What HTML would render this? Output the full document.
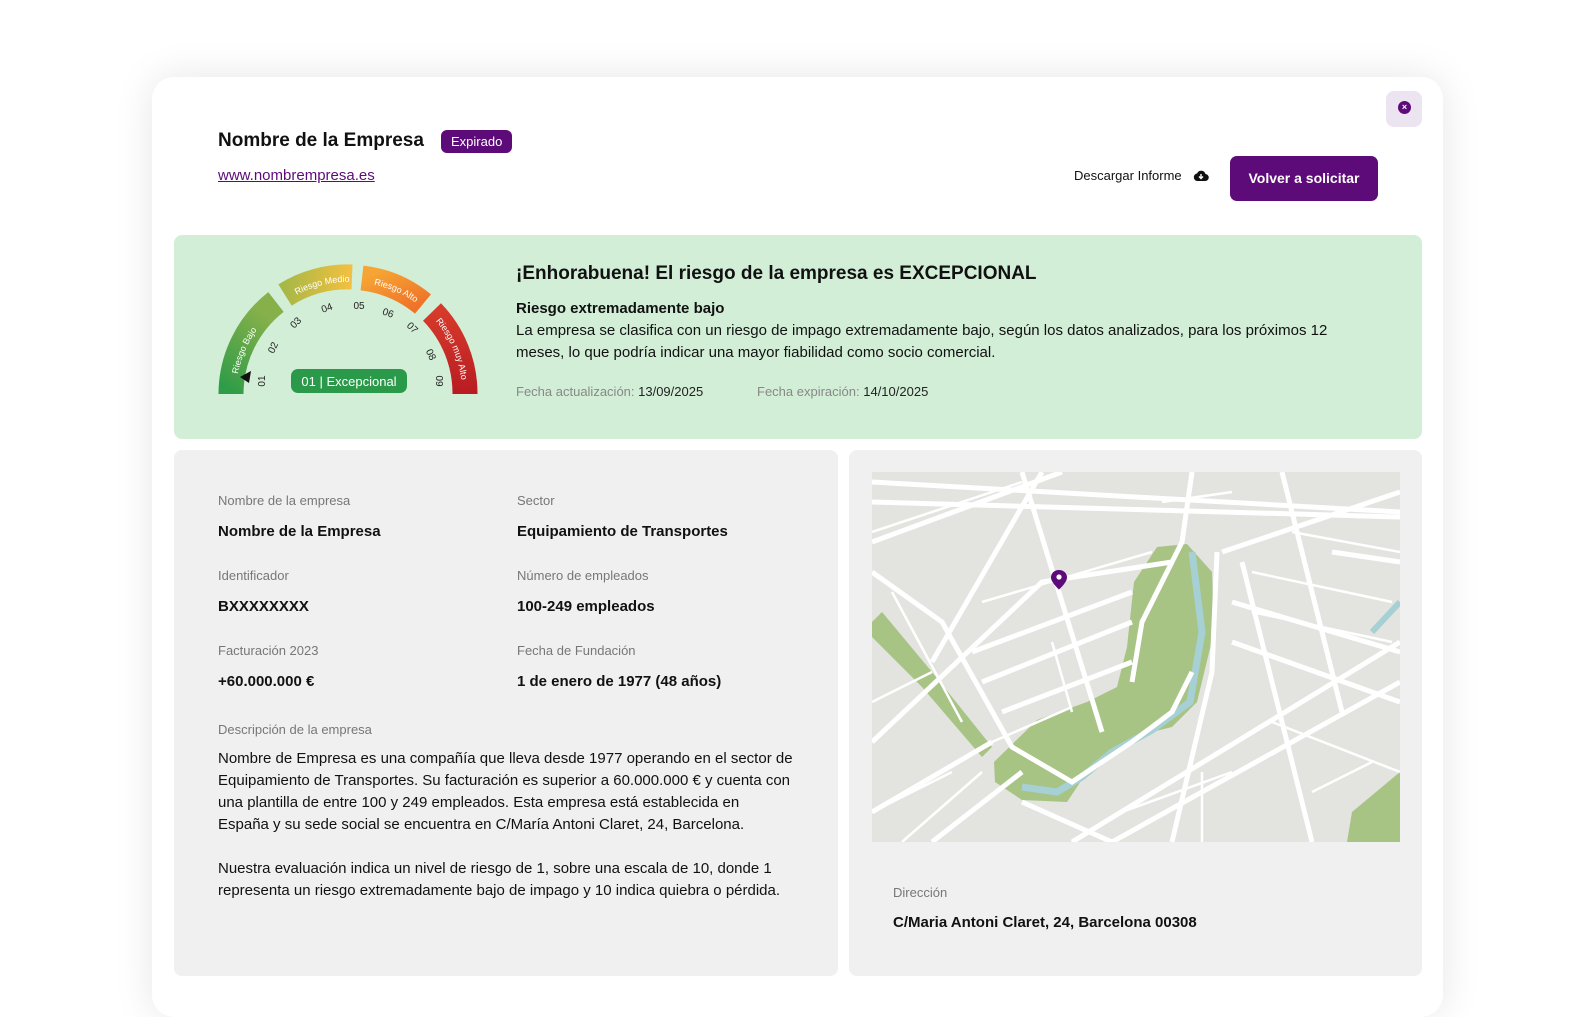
<!DOCTYPE html>
<html><head><meta charset="utf-8"><style>
*{box-sizing:border-box;margin:0;padding:0}
body{width:1580px;height:1006px;background:#fff;font-family:"Liberation Sans",Arial,sans-serif;color:#111;position:relative;overflow:hidden}
.card{position:absolute;left:152px;top:77px;width:1291px;height:940px;background:#fff;border-radius:22px;box-shadow:0 0 40px rgba(0,0,0,.10)}
.abs{position:absolute}
.lbl{font-size:13px;color:#777}
.val{font-size:15px;font-weight:bold;color:#111}
</style></head><body>
<div class="card"></div>
<div class="abs" style="left:218px;top:130px;font-size:19px;font-weight:bold">Nombre de la Empresa</div>
<div class="abs" style="left:441px;top:130px;background:#5e0b7a;color:#fff;font-size:13px;padding:4px 10px;border-radius:6px">Expirado</div>
<div class="abs" style="left:218px;top:167px;font-size:15px;color:#5e0b7a;text-decoration:underline">www.nombrempresa.es</div>
<div class="abs" style="left:1386px;top:91px;width:36px;height:36px;background:#ede4f1;border-radius:8px"><div style="position:absolute;left:12px;top:10px;width:13px;height:13px;border-radius:50%;background:#5e0b7a;color:#fff;font-size:9px;line-height:13px;text-align:center;font-weight:bold">×</div></div>
<div class="abs" style="left:1074px;top:168px;font-size:13px">Descargar Informe</div>
<svg class="abs" style="left:1193px;top:169px" width="16" height="14" viewBox="0 0 16 14"><path d="M4 12h8a3.5 3.5 0 0 0 .5-7A4.5 4.5 0 0 0 4 4.5 3.8 3.8 0 0 0 4 12z" fill="#111"/><path d="M8 5v4M6 7.5l2 2 2-2" stroke="#fff" stroke-width="1.4" fill="none"/></svg>
<div class="abs" style="left:1230px;top:156px;width:148px;height:45px;background:#5e0b7a;border-radius:7px;color:#fff;font-size:14px;font-weight:bold;text-align:center;line-height:45px">Volver a solicitar</div>

<div class="abs" style="left:174px;top:235px;width:1248px;height:204px;background:#d2eed7;border-radius:8px"></div>
<svg class="abs" style="left:0;top:0" width="520" height="420">
<defs>
<linearGradient id="g1" x1="0" y1="1" x2="0.4" y2="0"><stop offset="0" stop-color="#2e9c48"/><stop offset="1" stop-color="#86b04a"/></linearGradient>
<linearGradient id="g2" x1="0" y1="0" x2="1" y2="0"><stop offset="0" stop-color="#a8b846"/><stop offset="1" stop-color="#f4c040"/></linearGradient>
<linearGradient id="g3" x1="0" y1="0" x2="1" y2="1"><stop offset="0" stop-color="#f6a534"/><stop offset="1" stop-color="#ef7228"/></linearGradient>
<linearGradient id="g4" x1="0" y1="0" x2="0" y2="1"><stop offset="0" stop-color="#d63a2a"/><stop offset="1" stop-color="#b81c22"/></linearGradient>
<path id="a1" d="M231 394 A117 117 0 0 1 276 302"/>
<path id="a2" d="M285 295 A117 117 0 0 1 352 277"/>
<path id="a3" d="M362 278 A117 117 0 0 1 423 304"/>
<path id="a4" d="M432 312 A117 117 0 0 1 465 394"/>
<path id="t1" d="M236 394 A112 112 0 0 1 280 306"/>
<path id="t2" d="M288 300 A112 112 0 0 1 356 282"/>
<path id="t3" d="M362 283 A112 112 0 0 1 424 309"/>
<path id="t4" d="M433 318 A112 112 0 0 1 462 394"/>
</defs>
<g fill="none" stroke-width="25">
<use href="#a1" stroke="url(#g1)"/><use href="#a2" stroke="url(#g2)"/><use href="#a3" stroke="url(#g3)"/><use href="#a4" stroke="url(#g4)"/>
</g>
<g font-size="9" fill="#fff">
<text><textPath href="#t1" startOffset="20">Riesgo Bajo</textPath></text>
<text><textPath href="#t2" startOffset="10">Riesgo Medio</textPath></text>
<text><textPath href="#t3" startOffset="12">Riesgo Alto</textPath></text>
<text><textPath href="#t4" startOffset="4">Riesgo muy Alto</textPath></text>
</g>
<g font-size="10" fill="#222" text-anchor="middle">
<text transform="translate(265,381) rotate(-90)">01</text>
<text transform="translate(276,349) rotate(-65)">02</text>
<text transform="translate(298,325) rotate(-45)">03</text>
<text transform="translate(328,311) rotate(-20)">04</text>
<text transform="translate(359,309)">05</text>
<text transform="translate(387,316) rotate(20)">06</text>
<text transform="translate(410,330) rotate(45)">07</text>
<text transform="translate(428,356) rotate(65)">08</text>
<text transform="translate(436,381) rotate(90)">09</text>
</g>
<path d="M240 377 L251 371 L249 383 Z" fill="#111"/>
<rect x="291" y="369" width="116" height="24" rx="7" fill="#2a9a4a"/>
<text x="349" y="386" fill="#fff" font-size="13" text-anchor="middle">01 | Excepcional</text>
</svg>
<div class="abs" style="left:516px;top:263px;font-size:19px;font-weight:bold">¡Enhorabuena! El riesgo de la empresa es EXCEPCIONAL</div>
<div class="abs" style="left:516px;top:300px;font-size:15px;font-weight:bold">Riesgo extremadamente bajo</div>
<div class="abs" style="left:516px;top:320px;width:860px;font-size:15px;line-height:22px">La empresa se clasifica con un riesgo de impago extremadamente bajo, según los datos analizados, para los próximos 12 meses, lo que podría indicar una mayor fiabilidad como socio comercial.</div>
<div class="abs" style="left:516px;top:384px;font-size:13px;color:#888">Fecha actualización: <span style="color:#222">13/09/2025</span></div>
<div class="abs" style="left:757px;top:384px;font-size:13px;color:#888">Fecha expiración: <span style="color:#222">14/10/2025</span></div>

<div class="abs" style="left:174px;top:450px;width:664px;height:526px;background:#f0f0f0;border-radius:8px"></div>
<div class="abs lbl" style="left:218px;top:493px">Nombre de la empresa</div>
<div class="abs val" style="left:218px;top:523px">Nombre de la Empresa</div>
<div class="abs lbl" style="left:517px;top:493px">Sector</div>
<div class="abs val" style="left:517px;top:523px">Equipamiento de Transportes</div>
<div class="abs lbl" style="left:218px;top:568px">Identificador</div>
<div class="abs val" style="left:218px;top:598px">BXXXXXXXX</div>
<div class="abs lbl" style="left:517px;top:568px">Número de empleados</div>
<div class="abs val" style="left:517px;top:598px">100-249 empleados</div>
<div class="abs lbl" style="left:218px;top:643px">Facturación 2023</div>
<div class="abs val" style="left:218px;top:673px">+60.000.000 €</div>
<div class="abs lbl" style="left:517px;top:643px">Fecha de Fundación</div>
<div class="abs val" style="left:517px;top:673px">1 de enero de 1977 (48 años)</div>
<div class="abs lbl" style="left:218px;top:722px">Descripción de la empresa</div>
<div class="abs" style="left:218px;top:748px;width:590px;font-size:15px;line-height:22px">Nombre de Empresa es una compañía que lleva desde 1977 operando en el sector de Equipamiento de Transportes. Su facturación es superior a 60.000.000 € y cuenta con una plantilla de entre 100 y 249 empleados. Esta empresa está establecida en<br>España y su sede social se encuentra en C/María Antoni Claret, 24, Barcelona.<br><br>Nuestra evaluación indica un nivel de riesgo de 1, sobre una escala de 10, donde 1 representa un riesgo extremadamente bajo de impago y 10 indica quiebra o pérdida.</div>

<div class="abs" style="left:849px;top:450px;width:573px;height:526px;background:#f0f0f0;border-radius:8px"></div>
<svg class="abs" style="left:872px;top:472px" width="528" height="370" viewBox="0 0 528 370">
<rect width="528" height="370" fill="#e3e3e0"/>
<path d="M0 150 L10 140 L60 200 L120 275 L110 285 L50 215 L0 165Z" fill="#a7c485"/>
<path d="M122 290 L165 248 L215 230 L245 215 L255 175 L262 110 L285 75 L315 72 L340 100 L342 160 L325 230 L300 255 L260 265 L215 300 L195 330 L150 328 L123 310Z" fill="#a7c485"/>
<path d="M320 80 L330 160 L318 230 L280 258 L240 280 L210 305 L185 320 L150 315" stroke="#a6d0d4" stroke-width="7" fill="none"/>
<path d="M480 340 L528 300 L528 370 L475 370Z" fill="#a7c485"/>
<path d="M500 160 L528 130" stroke="#a6d0d4" stroke-width="6"/>
<g stroke="#fff" stroke-width="2.5" fill="none">
<path d="M0 60 L150 10"/><path d="M20 120 L90 250"/><path d="M0 230 L60 200"/><path d="M110 130 L280 80"/>
<path d="M80 300 L0 340"/><path d="M30 370 L110 300"/><path d="M380 100 L520 130"/><path d="M380 140 L520 170"/>
<path d="M400 250 L528 300"/><path d="M250 340 L360 300"/><path d="M420 60 L528 80"/><path d="M120 270 L200 235"/>
<path d="M180 170 L200 240"/><path d="M290 30 L360 20"/><path d="M440 320 L500 290"/><path d="M330 300 L330 370"/>
</g>
<g stroke="#fff" stroke-width="5" fill="none">
<path d="M0 10 L528 40"/><path d="M0 70 L190 0"/><path d="M0 30 L528 45"/>
<path d="M0 100 L70 150 L140 275 L200 310 L260 270 L300 240 L320 200"/>
<path d="M60 190 L170 0"/><path d="M0 270 L170 110 L300 90"/>
<path d="M100 180 L260 120"/><path d="M110 210 L260 150"/><path d="M130 240 L260 190"/>
<path d="M150 0 L230 260"/><path d="M320 0 L310 70 L270 150 L260 210"/>
<path d="M345 80 L340 200 L300 370"/><path d="M350 80 L528 20"/>
<path d="M200 370 L528 170"/><path d="M240 370 L528 210"/>
<path d="M360 130 L528 180"/><path d="M370 90 L440 370"/><path d="M410 0 L470 240"/>
<path d="M0 340 L120 270"/><path d="M60 370 L150 300"/><path d="M460 80 L528 90"/>
<path d="M360 170 L528 230"/><path d="M150 330 L240 370"/>
</g>
<path d="M187 98 c-5 0-8 3.5-8 7.5 0 5 8 12 8 12s8-7 8-12c0-4-3-7.5-8-7.5z" fill="#5e0b7a"/><circle cx="187" cy="105" r="2.6" fill="#fff"/>
</svg>
<div class="abs lbl" style="left:893px;top:885px">Dirección</div>
<div class="abs val" style="left:893px;top:914px">C/Maria Antoni Claret, 24, Barcelona 00308</div>
</body></html>
